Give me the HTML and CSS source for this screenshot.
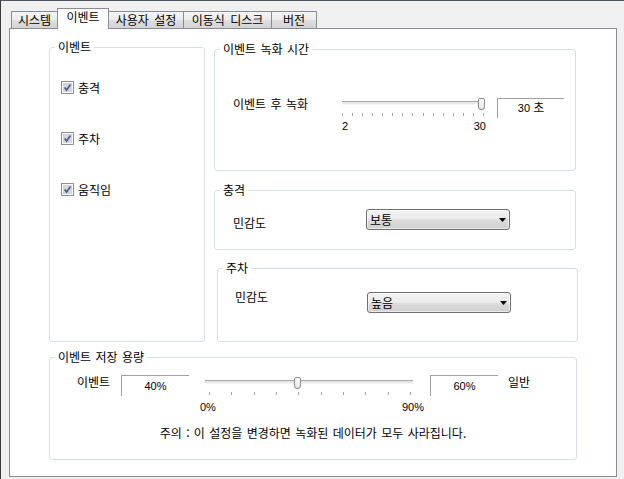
FILE: index.html
```html
<!DOCTYPE html>
<html lang="ko">
<head>
    <meta charset="UTF-8">
    <meta name="viewport" content="width=device-width, initial-scale=1.0">
    <title>이벤트 설정</title>
    <link rel="stylesheet" href="styles.css">
</head>
<body>
    <div class="window">
        <div class="tabs">
            <div class="tab tab-system">시스템</div>
            <div class="tab tab-event active">이벤트</div>
            <div class="tab tab-user">사용자 설정</div>
            <div class="tab tab-disk">이동식 디스크</div>
            <div class="tab tab-version">버전</div>
        </div>
        <div class="panel">
            <div class="top-row">
                <fieldset class="group events">
                    <legend>이벤트</legend>
                    <div class="check-list">
                        <label class="check-row">
                            <svg class="checkbox" width="13" height="13" viewBox="0 0 13 13"><rect x="0.5" y="0.5" width="12" height="12" fill="#fbfbfb" stroke="#8e8f8f"/><rect x="2" y="2" width="9" height="9" fill="#d3d6da"/><path d="M3.6 6.4l2 2.6 3.9-5.6" fill="none" stroke="#4b5e94" stroke-width="1.7"/></svg>
                            충격
                        </label>
                        <label class="check-row">
                            <svg class="checkbox" width="13" height="13" viewBox="0 0 13 13"><rect x="0.5" y="0.5" width="12" height="12" fill="#fbfbfb" stroke="#8e8f8f"/><rect x="2" y="2" width="9" height="9" fill="#d3d6da"/><path d="M3.6 6.4l2 2.6 3.9-5.6" fill="none" stroke="#4b5e94" stroke-width="1.7"/></svg>
                            주차
                        </label>
                        <label class="check-row">
                            <svg class="checkbox" width="13" height="13" viewBox="0 0 13 13"><rect x="0.5" y="0.5" width="12" height="12" fill="#fbfbfb" stroke="#8e8f8f"/><rect x="2" y="2" width="9" height="9" fill="#d3d6da"/><path d="M3.6 6.4l2 2.6 3.9-5.6" fill="none" stroke="#4b5e94" stroke-width="1.7"/></svg>
                            움직임
                        </label>
                    </div>
                </fieldset>

                <div class="right-col">
                    <fieldset class="group rec">
                        <legend>이벤트 녹화 시간</legend>
                        <div class="row">
                            <span class="rec-label">이벤트 후 녹화</span>
                            <div class="slider rec-slider">
                                <div class="track"></div>
                                <div class="thumb" style="left: 136px"></div>
                                <div class="ticks">
                                    <i></i><i></i><i></i><i></i><i></i><i></i><i></i><i></i>
                                    <i></i><i></i><i></i><i></i><i></i><i></i><i></i>
                                </div>
                                <div class="scale"><span>2</span><span>30</span></div>
                            </div>
                            <div class="textbox rec-box">30 <span class="unit">초</span></div>
                        </div>
                    </fieldset>

                    <fieldset class="group shock">
                        <legend>충격</legend>
                        <div class="row">
                            <span class="field-label">민감도</span>
                            <div class="select">
                                <span>보통</span>
                                <svg width="7" height="4" viewBox="0 0 7 4"><path d="M0 0h7L3.5 4z" fill="#000"/></svg>
                            </div>
                        </div>
                    </fieldset>

                    <fieldset class="group parking">
                        <legend>주차</legend>
                        <div class="row">
                            <span class="field-label">민감도</span>
                            <div class="select">
                                <span>높음</span>
                                <svg width="7" height="4" viewBox="0 0 7 4"><path d="M0 0h7L3.5 4z" fill="#000"/></svg>
                            </div>
                        </div>
                    </fieldset>
                </div>
            </div>

            <fieldset class="group storage">
                <legend>이벤트 저장 용량</legend>
                <div class="row">
                    <span class="store-label">이벤트</span>
                    <div class="textbox store-box">40%</div>
                    <div class="slider store-slider">
                        <div class="track"></div>
                        <div class="thumb" style="left: 89px"></div>
                        <div class="ticks">
                            <i></i><i></i><i></i><i></i><i></i><i></i><i></i><i></i><i></i><i></i>
                        </div>
                        <div class="scale"><span>0%</span><span>90%</span></div>
                    </div>
                    <div class="textbox store-box store-box2">60%</div>
                    <span class="store-end">일반</span>
                </div>
                <p class="note">주의 : 이 설정을 변경하면 녹화된 데이터가 모두 사라집니다.</p>
            </fieldset>
        </div>
    </div>
</body>
</html>
```

FILE: styles.css
```css
body {
    margin: 0;
    font-family: "Noto Sans CJK KR", sans-serif;
    font-size: 12px;
    color: #000;
    background: #f0f0f0;
}
.window {
    width: 624px;
    height: 479px;
    box-sizing: border-box;
    border-top: 1px solid #4f5560;
    border-left: 1px solid #3a3a3a;
    padding: 7px 0 0 8px;
    background: #f0f0f0;
    overflow: hidden;
}

/* tab strip */
.tabs {
    display: flex;
    align-items: flex-end;
    height: 21px;
    margin: 0 0 -1px 3px;
}
.tab {
    position: relative;
    height: 17px;
    box-sizing: border-box;
    margin: 0 0 1px -1px;
    border: 1px solid #898c95;
    border-bottom: none;
    background: linear-gradient(#f4f4f4, #ececec 50%, #dfdfdf 50%, #d4d4d4);
    line-height: 16px;
    text-align: center;
    word-spacing: 2px;
    white-space: nowrap;
}
.tab.active {
    z-index: 1;
    height: 21px;
    margin-bottom: 0;
    padding-top: 1px;
    background: #fff;
    line-height: 14px;
}
.tab-system { width: 47px; }
.tab-event { width: 52px; }
.tab-user { width: 76px; }
.tab-disk { width: 89px; }
.tab-version { width: 46px; }

.panel {
    width: 608px;
    height: 449px;
    box-sizing: border-box;
    border: 1px solid #898c95;
    background: #fff;
    padding: 11px 0 0 39px;
}

/* group boxes */
.group {
    margin: 0;
    padding: 0;
    min-width: 0;
    box-sizing: border-box;
    border: 1px solid #d5dfe5;
    border-radius: 3px;
}
.group legend {
    margin-left: 5px;
    padding: 0 3px;
    line-height: 14px;
    word-spacing: 1px;
}
.top-row {
    display: flex;
    gap: 9px;
}
.row {
    display: flex;
    align-items: flex-start;
}

.events {
    width: 156px;
    height: 302px;
    padding-top: 27px;
}
.check-list {
    display: flex;
    flex-direction: column;
    gap: 38px;
    padding-left: 11px;
}
.check-row {
    display: flex;
    align-items: center;
    gap: 4px;
    height: 13px;
    line-height: 14px;
}
.checkbox {
    flex: none;
}

.right-col {
    display: flex;
    flex-direction: column;
    width: 362px;
}
.rec {
    margin-top: 2px;
    height: 129px;
    padding-top: 42px;
}
.rec .row {
    padding-left: 18px;
}
.rec-label {
    flex: 0 0 109px;
    margin-top: -1px;
    line-height: 14px;
    word-spacing: 1px;
}

/* sliders */
.slider {
    position: relative;
    flex: none;
}
.rec-slider {
    width: 142px;
}
.track {
    margin-top: 3px;
    height: 4px;
    box-sizing: border-box;
    background: #e7e7e7;
    border-top: 1px solid #a6a6a6;
    border-bottom: 1px solid #f6f6f6;
}
.thumb {
    position: absolute;
    top: 0;
    width: 7px;
    height: 12px;
    box-sizing: border-box;
    border: 1px solid #8c8c8c;
    border-radius: 2px 2px 3px 3px;
    background: linear-gradient(#fefefe, #e4e4e4);
}
.ticks {
    display: flex;
    justify-content: space-between;
    height: 3px;
    margin-top: 8px;
}
.ticks i {
    width: 1px;
    background: #a3a3a3;
}
.scale {
    display: flex;
    justify-content: space-between;
    margin: 4px -2px 0 0;
    font-family: "Liberation Sans", sans-serif;
    font-size: 11px;
    line-height: 13px;
}

.textbox {
    flex: none;
    box-sizing: border-box;
    border-top: 1px solid #a0a0a0;
    border-left: 1px solid #a0a0a0;
    text-align: center;
    font-family: "Liberation Sans", "Noto Sans CJK KR", sans-serif;
    font-size: 11px;
}
.rec-box {
    margin-left: 13px;
    width: 67px;
    height: 20px;
    line-height: 19px;
}
.unit {
    font-size: 12px;
}

/* combo boxes */
.shock {
    margin-top: 12px;
    height: 67px;
    padding-top: 12px;
}
.shock .row {
    padding-left: 18px;
}
.parking {
    margin: 11px 0 0 3px;
    width: 361px;
    height: 81px;
    padding-top: 15px;
}
.parking .row {
    padding-left: 17px;
}
.field-label {
    line-height: 14px;
}
.shock .field-label {
    flex: 0 0 133px;
    margin-top: 7px;
}
.parking .field-label {
    flex: 0 0 132px;
}
.parking .select {
    margin-top: 2px;
}
.select {
    display: flex;
    align-items: center;
    justify-content: space-between;
    width: 144px;
    height: 21px;
    box-sizing: border-box;
    padding: 0 3px;
    border: 1px solid #707070;
    border-radius: 3px;
    background: linear-gradient(#f2f2f2, #ebebeb 50%, #dddddd 50%, #cfcfcf);
    box-shadow: inset 0 0 0 1px rgba(255, 255, 255, 0.55);
    line-height: 19px;
}

/* storage */
.storage {
    margin-top: 8px;
    width: 528px;
    height: 110px;
    padding-top: 11px;
}
.storage .row {
    padding-left: 27px;
}
.store-label {
    flex: 0 0 44px;
    line-height: 14px;
}
.store-box {
    width: 68px;
    height: 21px;
    line-height: 20px;
}
.store-slider {
    width: 208px;
    margin-left: 16px;
}
.store-slider .track {
    margin-top: 5px;
}
.store-slider .thumb {
    top: 2px;
}
.store-slider .ticks {
    padding: 0 2px 0 4px;
}
.store-slider .scale {
    margin: 6px -11px 0 -5px;
}
.store-box2 {
    margin-left: 17px;
}
.store-end {
    margin-left: 10px;
    line-height: 14px;
}
.note {
    margin: 12px 0 0;
    text-align: center;
    line-height: 14px;
    word-spacing: 1px;
}
```
